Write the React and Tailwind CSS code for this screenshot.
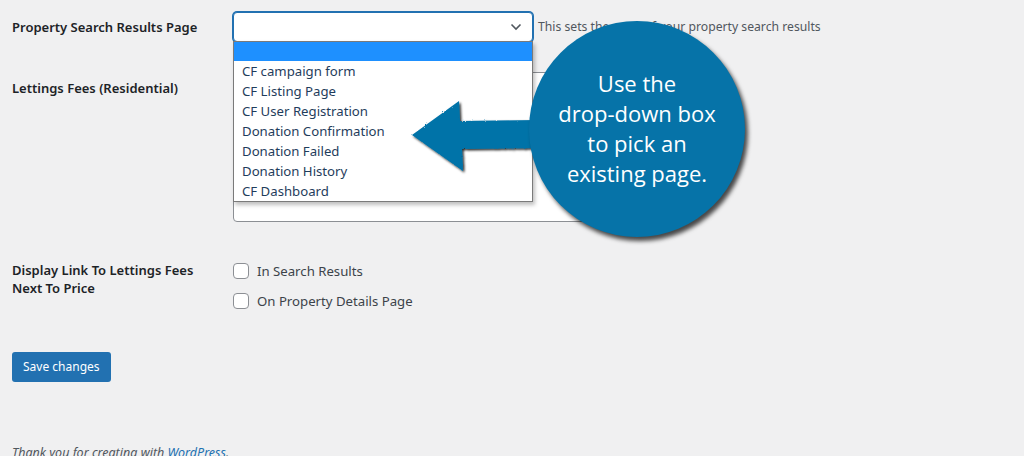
import React from "react";

const pages = [
  "CF campaign form",
  "CF Listing Page",
  "CF User Registration",
  "Donation Confirmation",
  "Donation Failed",
  "Donation History",
  "CF Dashboard",
];

function Chevron() {
  return (
    <svg width="12" height="8" viewBox="0 0 12 8" className="absolute right-[10px] top-[10px]">
      <path d="M1.5 1.5 L6 6 L10.5 1.5" fill="none" stroke="#50575e" strokeWidth="1.6" />
    </svg>
  );
}

function Arrow() {
  return (
    <svg
      width="140"
      height="90"
      viewBox="400 95 140 90"
      className="absolute left-[400px] top-[95px]"
    >
      <defs>
        <filter id="rough" x="-10%" y="-10%" width="130%" height="130%">
          <feTurbulence type="fractalNoise" baseFrequency="0.9" numOctaves="2" result="n" />
          <feDisplacementMap in="SourceGraphic" in2="n" scale="2.5" result="d" />
          <feDropShadow in="d" dx="1.5" dy="1.5" stdDeviation="0.8" floodColor="#000" floodOpacity="0.85" />
        </filter>
      </defs>
      <polygon
        filter="url(#rough)"
        fill="#0673a8"
        points="412,135 459,101 460,121 538,120 538,148 462,149 463,171"
      />
    </svg>
  );
}

export default function App() {
  return (
    <div
      className="relative w-[1024px] h-[456px] overflow-hidden bg-[#f0f0f1] px-3 text-[#1d2327]"
      style={{ fontFamily: '"Noto Sans", "Open Sans", sans-serif' }}
    >
      {/* row 1 */}
      <div className="flex pt-[12px]">
        <div className="w-[221px] pt-[5px] text-[13px] font-semibold leading-[20px]">
          Property Search Results Page
        </div>
        <div className="relative h-[30px] w-[300px] rounded-[4px] border border-[#2271b1] bg-white shadow-[0_0_0_1px_#2271b1]">
          <Chevron />
        </div>
        <div className="ml-[5px] pt-[6px] text-[12.2px] leading-[18px] text-[#50575e]">
          This sets the page of your property search results
        </div>
      </div>

      {/* row 2 */}
      <div className="mt-[30px] flex">
        <div className="w-[221px] pt-[6px] text-[13px] font-semibold leading-[20px]">
          Lettings Fees (Residential)
        </div>
        <div className="h-[150px] w-[420px] rounded-[4px] border border-[#8c8f94] bg-white" />
      </div>

      {/* row 3 */}
      <div className="mt-[39px] flex">
        <div className="w-[200px] text-[13px] font-semibold leading-[18px]">
          Display Link To Lettings Fees Next To Price
        </div>
        <div className="ml-[21px] flex flex-col gap-[14px] pt-[2px]">
          <label className="flex items-center gap-[8px] text-[13.2px] leading-[16px] text-[#3c434a]">
            <span className="h-[16px] w-[16px] rounded-[4px] border border-[#8c8f94] bg-white" />
            In Search Results
          </label>
          <label className="flex items-center gap-[8px] text-[13.2px] leading-[16px] text-[#3c434a]">
            <span className="h-[16px] w-[16px] rounded-[4px] border border-[#8c8f94] bg-white" />
            On Property Details Page
          </label>
        </div>
      </div>

      <button className="mt-[43px] h-[30px] rounded-[3px] bg-[#2271b1] px-[11px] text-[12px] text-white">
        Save changes
      </button>

      <p className="mt-[62px] text-[12.5px] italic text-[#50575e]">
        Thank you for creating with <span className="text-[#2271b1]">WordPress</span>.
      </p>

      {/* open dropdown list */}
      <div className="absolute left-[233px] top-[41px] w-[300px] border border-[#7a7a7a] bg-white shadow-[2px_3px_4px_rgba(0,0,0,0.25)]">
        <div className="h-[19px] bg-[#1e90ff]" />
        {pages.map((p) => (
          <div key={p} className="h-[20px] pl-[8px] text-[13.2px] leading-[20px] text-[#1f3d5c]">
            {p}
          </div>
        ))}
      </div>

      <Arrow />

      {/* callout bubble */}
      <div
        className="absolute left-[529px] top-[21px] flex h-[216px] w-[216px] items-center justify-center rounded-full bg-[#0673a8] pb-[2px] text-center text-[22px] leading-[30px] text-white shadow-[3px_4px_4px_rgba(0,0,0,0.7)]"
        style={{ fontFamily: '"Open Sans", sans-serif' }}
      >
        <div>
          Use the
          <br />
          drop-down box
          <br />
          to pick an
          <br />
          existing page.
        </div>
      </div>
    </div>
  );
}
